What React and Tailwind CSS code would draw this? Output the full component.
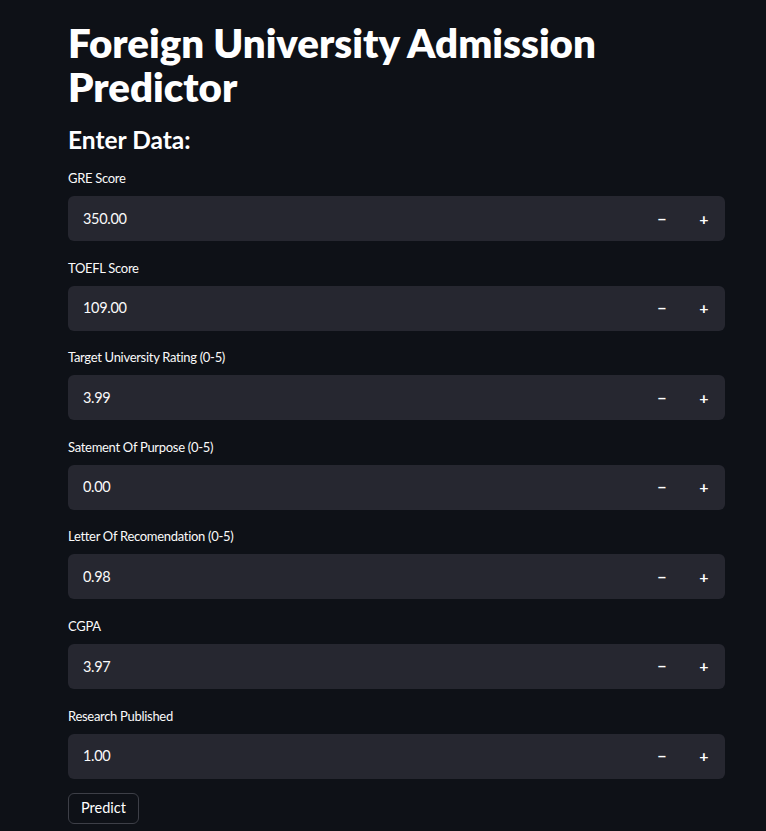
const fields = [
  { label: 'GRE Score', value: '350.00' },
  { label: 'TOEFL Score', value: '109.00' },
  { label: 'Target University Rating (0-5)', value: '3.99' },
  { label: 'Satement Of Purpose (0-5)', value: '0.00' },
  { label: 'Letter Of Recomendation (0-5)', value: '0.98' },
  { label: 'CGPA', value: '3.97' },
  { label: 'Research Published', value: '1.00' },
];

const NumberInput = ({ label, value }) => (
  <div className="mb-[16.6px]">
    <label className="block h-5 text-[13px] leading-5 tracking-[-0.3px] text-[#fafafa] mb-2">{label}</label>
    <div className="flex h-[45px] rounded-md bg-[#262730] overflow-hidden">
      <input
        readOnly
        value={value}
        className="flex-1 min-w-0 bg-transparent px-[15px] text-[14.5px] tracking-[-0.3px] text-[#fafafa] outline-none"
      />
      <div className="flex w-[84px]">
        <button className="w-[42px] flex items-center justify-center text-white font-bold text-[16px]">−</button>
        <button className="w-[42px] flex items-center justify-center text-white font-bold text-[16px]">+</button>
      </div>
    </div>
  </div>
);

export default function App() {
  return (
    <div
      className="min-h-screen bg-[#0e1117] text-[#fafafa] pl-[68px] pr-[41px] pt-[21px] pb-10"
      style={{ fontFamily: 'Lato, "Noto Sans", sans-serif' }}
    >
      <h1 className="text-[40.2px] font-extrabold leading-[44px] text-white">
        Foreign University Admission Predictor
      </h1>
      <h2 className="mt-[16px] mb-[13px] text-[24.5px] font-bold leading-[30px] text-white">Enter Data:</h2>
      {fields.map((f) => (
        <NumberInput key={f.label} {...f} />
      ))}
      <button className="-mt-[3px] h-[31px] px-3 rounded-md border border-[#3d3f47] text-[14.5px] text-white">
        Predict
      </button>
    </div>
  );
}
